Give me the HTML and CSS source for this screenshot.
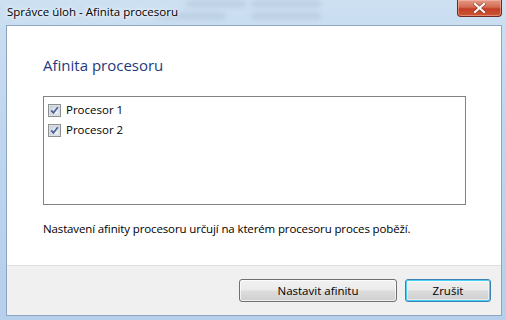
FILE: index.html
```html
<!DOCTYPE html>
<html lang="cs">
<head>
<meta charset="utf-8">
<title>Afinita procesoru</title>
<link rel="stylesheet" href="styles.css">
</head>
<body>
<div class="window">
  <div class="titlebar">
    <div class="title">Správce úloh - Afinita procesoru</div>
    <div class="glass">
      <span class="blur b1"></span><span class="blur b2"></span>
      <span class="blur b3"></span><span class="blur b4"></span>
    </div>
    <div class="close">
      <svg width="13" height="10" viewBox="0 0 13 10" aria-hidden="true">
        <path d="M2 1 L11 9 M11 1 L2 9" stroke="#5a1a10" stroke-width="3.4" stroke-linecap="square" opacity="0.55"/>
        <path d="M2 1 L11 9 M11 1 L2 9" stroke="#ffffff" stroke-width="2.2" stroke-linecap="square"/>
      </svg>
    </div>
  </div>
  <div class="client">
    <div class="content">
      <h1 class="heading">Afinita procesoru</h1>
      <div class="listbox">
        <label class="item">
          <span class="check"><svg width="13" height="13" viewBox="0 0 13 13" aria-hidden="true"><rect x="0.5" y="0.5" width="12" height="12" fill="#f4f4f4" stroke="#8e8f8f"/><rect x="2" y="2" width="9" height="9" fill="url(#g1)" stroke="#b9c3cf" stroke-width="0.8"/><defs><linearGradient id="g1" x1="0" y1="0" x2="1" y2="1"><stop offset="0" stop-color="#cbd4df"/><stop offset="1" stop-color="#f6f8fa"/></linearGradient></defs><path d="M3.3 6.4 L5.4 8.9 L9.8 3.2" fill="none" stroke="#4a5f97" stroke-width="1.7"/></svg></span>
          <span>Procesor 1</span>
        </label>
        <label class="item">
          <span class="check"><svg width="13" height="13" viewBox="0 0 13 13" aria-hidden="true"><rect x="0.5" y="0.5" width="12" height="12" fill="#f4f4f4" stroke="#8e8f8f"/><rect x="2" y="2" width="9" height="9" fill="url(#g1)" stroke="#b9c3cf" stroke-width="0.8"/><path d="M3.3 6.4 L5.4 8.9 L9.8 3.2" fill="none" stroke="#4a5f97" stroke-width="1.7"/></svg></span>
          <span>Procesor 2</span>
        </label>
      </div>
      <p class="desc">Nastavení afinity procesoru určují na kterém procesoru proces poběží.</p>
    </div>
    <div class="footer">
      <button class="btn">Nastavit afinitu</button>
      <button class="btn default">Zrušit</button>
    </div>
  </div>
</div>
</body>
</html>
```

FILE: styles.css
```css
html, body {
  margin: 0;
  padding: 0;
}
body {
  width: 506px;
  height: 320px;
  overflow: hidden;
  font-family: "Open Sans", "Noto Sans", "Liberation Sans", sans-serif;
  font-size: 11.5px;
  color: #000;
}
.window {
  width: 506px;
  height: 320px;
  box-sizing: border-box;
  padding: 0 4px 4px 6px;
  display: flex;
  flex-direction: column;
  background: linear-gradient(180deg, #cde0f2 0%, #bfd6ee 40%, #b6cfea 100%);
}
.titlebar {
  height: 25px;
  flex: none;
  display: flex;
  align-items: flex-start;
  justify-content: space-between;
  position: relative;
}
.title {
  padding: 4px 0 0 1px;
  font-size: 11.5px;
  line-height: 16px;
  color: #000;
  text-shadow: 0 0 6px rgba(255,255,255,0.9), 0 0 3px rgba(255,255,255,0.9);
  position: relative;
  z-index: 1;
}
.glass {
  position: absolute;
  left: 150px;
  top: 0;
  width: 300px;
  height: 25px;
}
.blur {
  position: absolute;
  height: 6px;
  border-radius: 3px;
  background: rgba(120, 140, 165, 0.2);
  filter: blur(2.5px);
}
.b1 { left: 30px; top: 1px; width: 60px; }
.b2 { left: 95px; top: 1px; width: 70px; }
.b3 { left: 0px; top: 13px; width: 70px; }
.b4 { left: 95px; top: 13px; width: 70px; }
.close {
  width: 45px;
  height: 17px;
  margin-right: 0;
  box-sizing: border-box;
  border: 1px solid #6e2a22;
  border-top: none;
  border-radius: 0 0 4px 4px;
  background: linear-gradient(180deg, #e49a86 0%, #d46a52 45%, #c23f26 55%, #cc5634 100%);
  box-shadow: inset 0 0 0 1px rgba(255,200,185,0.45);
  display: flex;
  align-items: center;
  justify-content: center;
  position: relative;
  z-index: 1;
}
.client {
  flex: 1;
  display: flex;
  flex-direction: column;
  background: #fff;
  border: 1px solid #8ea4c0;
}
.content {
  flex: 1;
  padding: 29px 0 0 36px;
}
.heading {
  margin: 0;
  font-weight: normal;
  font-size: 15px;
  line-height: 20px;
  color: #1e3a7e;
}
.listbox {
  margin-top: 21px;
  width: 423px;
  height: 109px;
  box-sizing: border-box;
  border: 1px solid #828282;
  padding: 3px 0 0 4px;
  display: flex;
  flex-direction: column;
}
.item {
  height: 20px;
  display: flex;
  align-items: center;
  gap: 5px;
  line-height: 16px;
}
.check {
  width: 13px;
  height: 13px;
  display: flex;
}
.desc {
  margin: 16px 0 0;
  line-height: 16px;
  letter-spacing: -0.13px;
}
.footer {
  flex: none;
  height: 50px;
  box-sizing: border-box;
  border-top: 1px solid #dfdfdf;
  background: #f0f0f0;
  display: flex;
  justify-content: flex-end;
  align-items: flex-start;
  gap: 8px;
  padding: 13px 10px 0 0;
}
.btn {
  font-family: inherit;
  font-size: 11.5px;
  color: #000;
  height: 23px;
  padding: 0;
  border: 1px solid #707070;
  border-radius: 3px;
  background: linear-gradient(180deg, #f2f2f2 0%, #ebebeb 48%, #dddddd 52%, #cfcfcf 100%);
  box-shadow: inset 0 0 0 1px rgba(255,255,255,0.7);
  width: 158px;
}
.btn.default {
  width: 86px;
  border-color: #3c7fb1;
  background: linear-gradient(180deg, #f1f1f1 0%, #e9e9e9 48%, #dbdbdb 52%, #cfcfcf 100%);
  box-shadow: inset 0 0 0 1px #48d1f7, inset 0 0 0 2px rgba(255,255,255,0.5);
}
```
